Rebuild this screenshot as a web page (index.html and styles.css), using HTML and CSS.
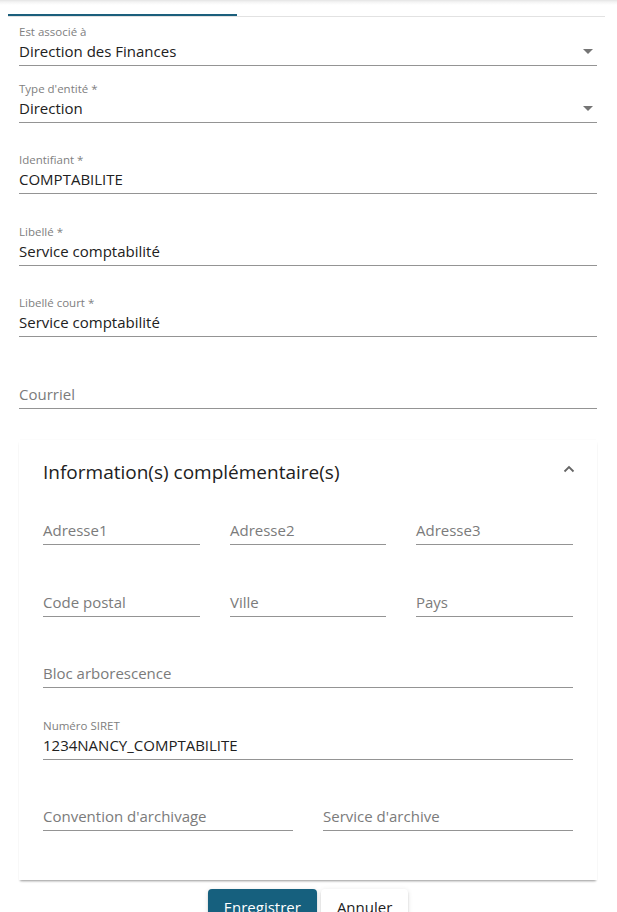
FILE: index.html
```html
<!DOCTYPE html>
<html lang="fr">
<head>
<meta charset="utf-8">
<title>Entité</title>
<link rel="stylesheet" href="styles.css">
</head>
<body>
<div class="tabbar"><div class="ink"></div></div>
<form class="form">
  <div class="field select first">
    <div class="label">Est associé à</div>
    <div class="value"><span>Direction des Finances</span><span class="caret"></span></div>
  </div>
  <div class="field select second">
    <div class="label">Type d'entité *</div>
    <div class="value"><span>Direction</span><span class="caret"></span></div>
  </div>
  <div class="field gap30">
    <div class="label">Identifiant *</div>
    <div class="value">COMPTABILITE</div>
  </div>
  <div class="field gap31">
    <div class="label">Libellé *</div>
    <div class="value">Service comptabilité</div>
  </div>
  <div class="field gap30">
    <div class="label">Libellé court *</div>
    <div class="value">Service comptabilité</div>
  </div>
  <div class="field gap31">
    <div class="label"></div>
    <div class="value placeholder">Courriel</div>
  </div>

  <section class="panel">
    <div class="panel-header">
      <span class="panel-title">Information(s) complémentaire(s)</span>
      <svg class="chevron" width="12" height="8" viewBox="0 0 12 8"><path d="M1.5 6.5 L6 2 L10.5 6.5" fill="none" stroke="#666" stroke-width="1.8"/></svg>
    </div>
    <div class="panel-body">
      <div class="row three">
        <div class="field"><div class="label"></div><div class="value placeholder">Adresse1</div></div>
        <div class="field"><div class="label"></div><div class="value placeholder">Adresse2</div></div>
        <div class="field"><div class="label"></div><div class="value placeholder">Adresse3</div></div>
      </div>
      <div class="row three gap31">
        <div class="field"><div class="label"></div><div class="value placeholder">Code postal</div></div>
        <div class="field"><div class="label"></div><div class="value placeholder">Ville</div></div>
        <div class="field"><div class="label"></div><div class="value placeholder">Pays</div></div>
      </div>
      <div class="field gap30">
        <div class="label"></div>
        <div class="value placeholder">Bloc arborescence</div>
      </div>
      <div class="field gap31">
        <div class="label">Numéro SIRET</div>
        <div class="value">1234NANCY_COMPTABILITE</div>
      </div>
      <div class="row two gap30">
        <div class="field"><div class="label"></div><div class="value placeholder">Convention d'archivage</div></div>
        <div class="field"><div class="label"></div><div class="value placeholder">Service d'archive</div></div>
      </div>
    </div>
  </section>

  <div class="actions">
    <button type="button" class="btn primary">Enregistrer</button>
    <button type="button" class="btn">Annuler</button>
  </div>
</form>
</body>
</html>
```
FILE: styles.css
```css
* { box-sizing: border-box; }
html, body { margin: 0; padding: 0; }
body {
  font-family: "Open Sans", "Noto Sans", sans-serif;
  color: #212121;
  background: #fff linear-gradient(to bottom, #e4e4e4 0, #f4f4f4 2px, #fff 5px) no-repeat;
  background-size: 100% 6px;
  width: 617px;
  height: 912px;
  overflow: hidden;
}
.tabbar {
  height: 17px;
  margin: 0 12px 0 8px;
  border-bottom: 1px solid #e2e2e2;
  display: flex;
  align-items: flex-end;
}
.ink {
  width: 229px;
  height: 2px;
  background: #1b5f7c;
}
.form {
  padding: 0 20px 0 19px;
}
.field {
  border-bottom: 1px solid #949494;
}
.field .label {
  height: 13px;
  line-height: 13px;
  font-size: 11.5px;
  color: #808080;
  margin-bottom: 4px;
  white-space: nowrap;
}
.field .value {
  height: 18px;
  line-height: 18px;
  font-size: 15px;
  color: #212121;
  margin-bottom: 5px;
  white-space: nowrap;
}
.field .value.placeholder { color: #7b7b7b; }
.field.select .value {
  display: flex;
  justify-content: space-between;
  align-items: center;
}
.caret {
  width: 0;
  height: 0;
  border-left: 5px solid transparent;
  border-right: 5px solid transparent;
  border-top: 5px solid #757575;
  margin-right: 4px;
}
.first { margin-top: 8px; }
.second { margin-top: 16px; }
.gap30 { margin-top: 30px; }
.gap31 { margin-top: 31px; }

.panel {
  margin-top: 31px;
  background: #fff;
  box-shadow: 0 2px 2px -1px rgba(0,0,0,.32), 0 3px 3px -2px rgba(0,0,0,.12), 0 -1px 1px -1px rgba(0,0,0,.08);
}
.panel-header {
  height: 64px;
  padding: 0 24px;
  display: flex;
  align-items: center;
  justify-content: space-between;
}
.panel-title {
  font-size: 19px;
  color: #212121;
  margin-top: -1px;
}
.chevron { margin-top: -6px; margin-right: -2px; }
.panel-body {
  padding: 0 24px 49px;
}
.row { display: grid; column-gap: 30px; }
.row .field { margin: 0; }
.row.three { grid-template-columns: 157px 156px 157px; column-gap: 30px; }
.row.two { grid-template-columns: 250px 250px; }
.row { border: 0; }

.actions {
  margin-top: 9px;
  display: flex;
  justify-content: center;
  gap: 4px;
}
.btn {
  font-family: inherit;
  font-size: 15px;
  height: 36px;
  padding: 0 16px;
  border: 0;
  border-radius: 4px;
  background: #fff;
  color: #212121;
  box-shadow: 0 3px 1px -2px rgba(0,0,0,.2), 0 2px 2px 0 rgba(0,0,0,.14), 0 1px 5px 0 rgba(0,0,0,.12);
}
.btn.primary {
  background: #16607e;
  color: #fff;
}
```
